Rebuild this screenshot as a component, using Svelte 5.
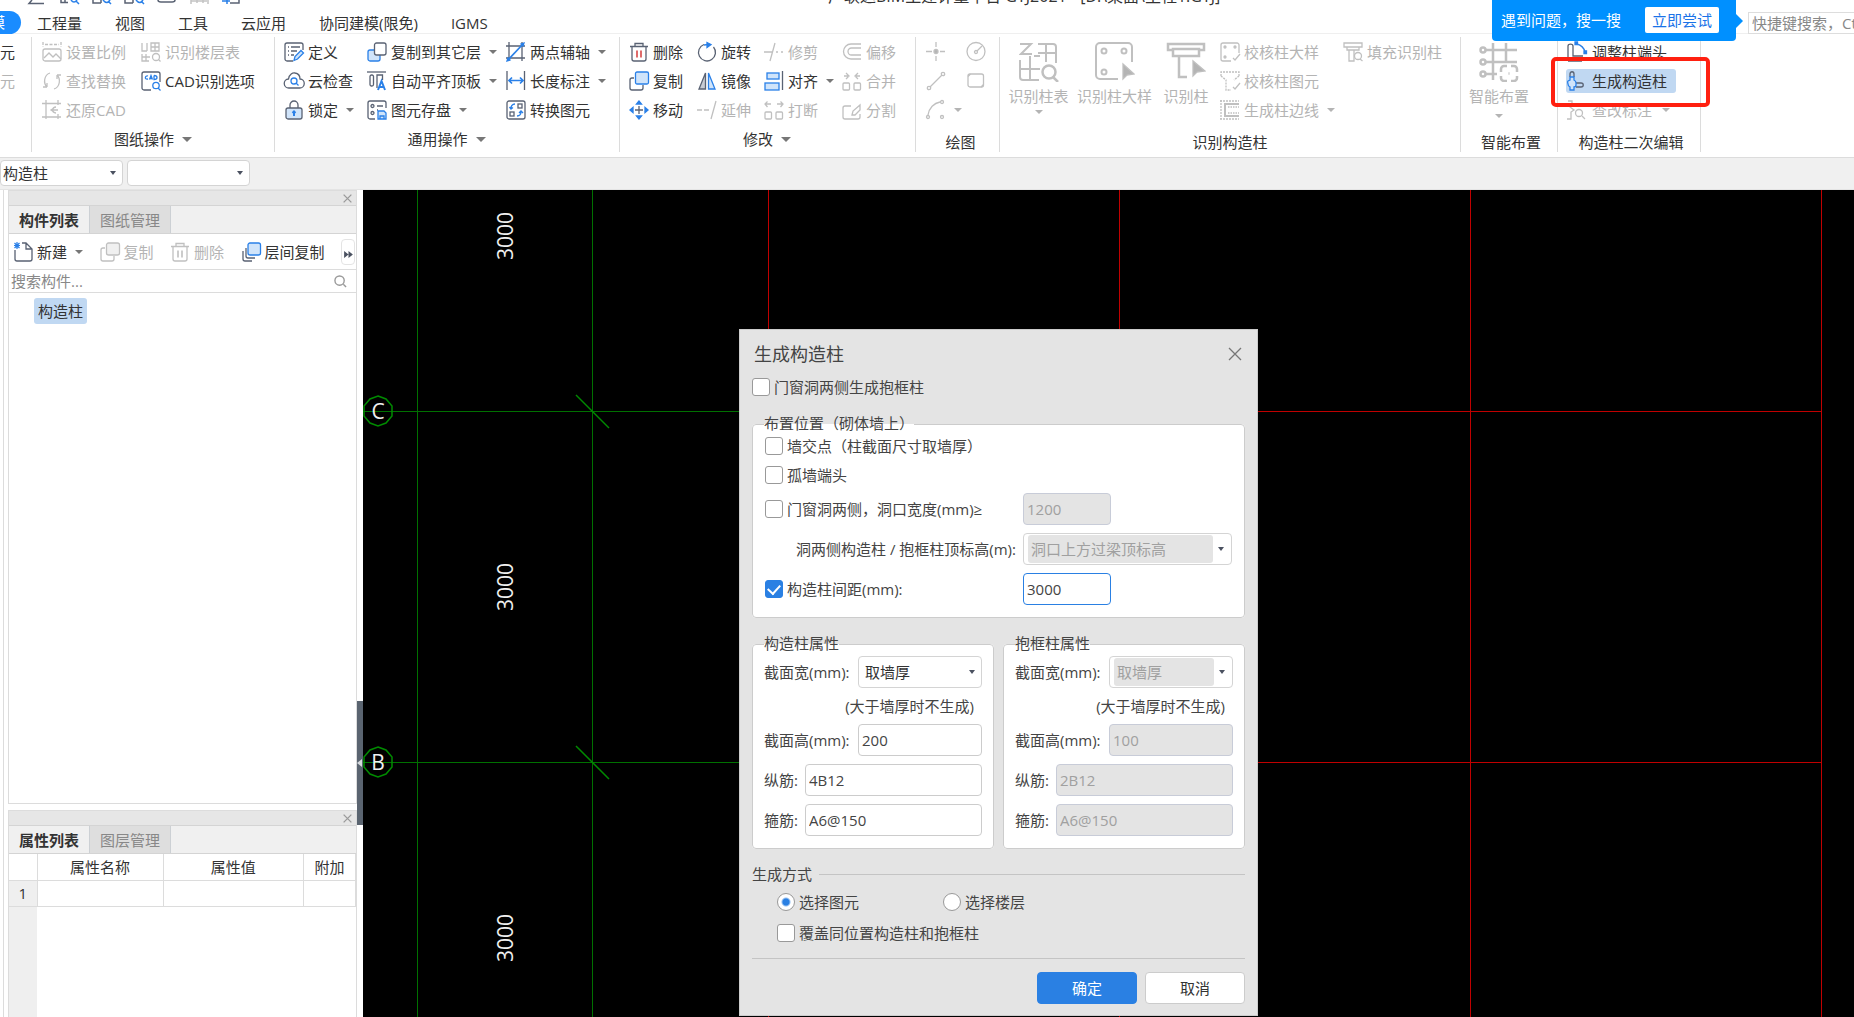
<script lang="ts">
	type Tool = { icon: string; label: string; off?: boolean; menu?: boolean; active?: boolean };
	type Group = { id: string; title: string; menu?: boolean; big?: Tool[]; cols: Tool[][] };

	const menu_tabs = ['工程量', '视图', '工具', '云应用', '协同建模(限免)', 'IGMS'];

	const groups: Group[] = [
		{
			id: 'sheet',
			title: '图纸操作',
			menu: true,
			cols: [
				[
					{ icon: 'scale', label: '设置比例', off: true },
					{ icon: 'replace', label: '查找替换', off: true },
					{ icon: 'restore', label: '还原CAD', off: true },
				],
				[
					{ icon: 'floors', label: '识别楼层表', off: true },
					{ icon: 'cad', label: 'CAD识别选项' },
				],
			],
		},
		{
			id: 'common',
			title: '通用操作',
			menu: true,
			cols: [
				[
					{ icon: 'define', label: '定义' },
					{ icon: 'cloud', label: '云检查' },
					{ icon: 'lock', label: '锁定', menu: true },
				],
				[
					{ icon: 'copyfloor', label: '复制到其它层', menu: true },
					{ icon: 'autoalign', label: '自动平齐顶板', menu: true },
					{ icon: 'save', label: '图元存盘', menu: true },
				],
				[
					{ icon: 'axis', label: '两点辅轴', menu: true },
					{ icon: 'length', label: '长度标注', menu: true },
					{ icon: 'convert', label: '转换图元' },
				],
			],
		},
		{
			id: 'modify',
			title: '修改',
			menu: true,
			cols: [
				[
					{ icon: 'trash', label: '删除' },
					{ icon: 'copy', label: '复制' },
					{ icon: 'move', label: '移动' },
				],
				[
					{ icon: 'rotate', label: '旋转' },
					{ icon: 'mirror', label: '镜像' },
					{ icon: 'extend', label: '延伸', off: true },
				],
				[
					{ icon: 'trim', label: '修剪', off: true },
					{ icon: 'align', label: '对齐', menu: true },
					{ icon: 'break', label: '打断', off: true },
				],
				[
					{ icon: 'offset', label: '偏移', off: true },
					{ icon: 'merge', label: '合并', off: true },
					{ icon: 'split', label: '分割', off: true },
				],
			],
		},
		{
			id: 'draw',
			title: '绘图',
			cols: [
				[
					{ icon: 'point', label: '', off: true },
					{ icon: 'line', label: '', off: true },
					{ icon: 'arc', label: '', off: true, menu: true },
				],
				[
					{ icon: 'circle', label: '', off: true },
					{ icon: 'rect', label: '', off: true },
				],
			],
		},
		{
			id: 'identify',
			title: '识别构造柱',
			big: [
				{ icon: 'bigtable', label: '识别柱表', off: true, menu: true },
				{ icon: 'bigdetail', label: '识别柱大样', off: true },
				{ icon: 'bigcolumn', label: '识别柱', off: true },
			],
			cols: [
				[
					{ icon: 'checkdetail', label: '校核柱大样', off: true },
					{ icon: 'checkelement', label: '校核柱图元', off: true },
					{ icon: 'edge', label: '生成柱边线', off: true, menu: true },
				],
				[{ icon: 'fill', label: '填充识别柱', off: true }],
			],
		},
		{
			id: 'smart',
			title: '智能布置',
			big: [{ icon: 'bigsmart', label: '智能布置', off: true, menu: true }],
			cols: [],
		},
		{
			id: 'edit',
			title: '构造柱二次编辑',
			cols: [
				[
					{ icon: 'adjust', label: '调整柱端头' },
					{ icon: 'generate', label: '生成构造柱', active: true },
					{ icon: 'note', label: '查改标注', off: true, menu: true },
				],
			],
		},
	];

	const B = 'stroke="#2a80e8"';
	const BF = 'stroke="#2a80e8" fill="#d0e4fa"';

	const icons: Record<string, string> = {
		scale: `<path d="M1 0v5M19 0v5M3 2.500h14" stroke-dasharray="3 1.500"/><rect x="1" y="7" width="18" height="12" rx="2"/><path d="M2 16l5-5 4 4 3-3 5 5"/>`,
		replace: `<path d="M8 2C2 4 1 12 5 16M5 16v-4M5 16H1M12 18c6-2 7-10 3-14M15 4v4M15 4h4"/>`,
		restore: `<path d="M4 0v19M0 3.500h19M0 17h19M16 0v5M16 14v5M14 7c-4 0-5 6 0 6M9 10h7M12 8l-3 2 3 2"/>`,
		floors: `<path d="M1 1v8h5M6 1v8M10 1h8v8h-8zM14 1v8M10 5h8M1 12v7h7M5 12v7M1 15h8"/><circle cx="15" cy="15" r="3.500"/><path d="M17.500 17.500l2 2"/>`,
		cad: `<path d="M10 19H3a2 2 0 0 1-2-2V3a2 2 0 0 1 2-2h14a2 2 0 0 1 2 2v8"/><path ${B} stroke-width="1.300" d="M7 5c-3-1-4 4 0 3M8.500 8.500L10 4.500l1.500 4M9 7.500h2M13 4.500v4c4 0 4-4 0-4"/><circle ${B} cx="15" cy="14.500" r="3.200"/><path ${B} d="M17 17l2.500 2.500"/>`,
		define: `<path d="M9 19H3a2 2 0 0 1-2-2V3a2 2 0 0 1 2-2h14a2 2 0 0 1 2 2v5"/><path d="M4 5h1M7 5h9M4 9h1M7 9h6M4 13h1M7 13h3"/><path ${BF} d="M10 18.500l1-4 6-6 2.500 2.500-6 6z"/>`,
		cloud: `<path d="M5 17a4.500 4.500 0 0 1-.500-9C5 3 9 1.500 11 2c3 .500 5 3 5 6a4.500 4.500 0 0 1-.500 9z"/><circle ${B} cx="10" cy="10" r="3"/><path ${B} d="M12 12l2.500 2.500"/>`,
		lock: `<path d="M6 8V5a4 4 0 0 1 8 0v3"/><rect x="2" y="8" width="16" height="11" rx="2" fill="#d0e4fa"/><path ${B} stroke-width="2" d="M10 16v-4M8.500 13l1.500-1.500 1.500 1.500"/>`,
		copyfloor: `<rect ${BF} x="1" y="8" width="12" height="11" rx="2"/><rect x="7.500" y="1" width="11.500" height="12" rx="2" fill="#fff"/>`,
		autoalign: `<path d="M0 1h19"/><rect x="3" y="4" width="3.500" height="11" rx="1.500"/><path d="M10 17V4h5.500v5"/><path ${B} stroke-width="2" d="M11 19l3.500-9 3.500 9M12.500 16h4"/>`,
		save: `<path d="M8 19H3a2 2 0 0 1-2-2V3a2 2 0 0 1 2-2h14a2 2 0 0 1 2 2v5"/><circle cx="5.500" cy="6" r="1.500"/><path d="M10 6h6M10 10h1"/><circle cx="5.500" cy="13" r="1.500"/><path ${BF} d="M11 11h6l2 2v6h-8zM13 19v-3h4v3"/>`,
		axis: `<path d="M3 0v19M16 0v19M0 4h19M0 16h19"/><path ${B} stroke-width="1.800" d="M2 18L17 2"/><path fill="#2a80e8" ${B} d="M1 19l1-3 2 2zM18 1l-1 3-2-2z"/>`,
		length: `<path d="M1 0v19M18.500 0v19"/><path ${B} stroke-width="1.700" d="M3 9.500h14M6 6.500l-3 3 3 3M14 6.500l3 3-3 3"/>`,
		convert: `<rect x="1" y="1" width="18" height="18" rx="2"/><rect x="12" y="4" width="4" height="4"/><rect x="4" y="12" width="4" height="4"/><path ${B} d="M9 4C6 4 5 6 5 8.500M3.500 7L5 9l2-1.500M11 16c3 0 4-2 4-4.500M13 13l2-2 2 2"/>`,
		trash: `<path d="M1 4.500h18M6 4V1.500h8V4M3 5v12a2 2 0 0 0 2 2h10a2 2 0 0 0 2-2V5"/><path class="mark" stroke="#d94848" stroke-width="1.600" d="M8 8.500v7M12 8.500v7"/>`,
		copy: `<path d="M5 7H3a2 2 0 0 0-2 2v8a2 2 0 0 0 2 2h9a2 2 0 0 0 2-2v-3"/><rect ${BF} x="6.500" y="1" width="13" height="12" rx="1.500"/>`,
		move: `<path d="M10 6v8M6 10h8"/><path ${B} fill="#2a80e8" d="M10 1L7.500 4h5zM10 19l-2.500-3h5zM1 10l3-2.500v5zM19 10l-3-2.500v5z"/>`,
		rotate: `<path d="M7 2.500A8.500 8.500 0 1 0 16.500 5"/><path ${B} fill="#2a80e8" d="M10 .500l4 2-4 3z"/><path ${B} d="M7 3l4-.500"/>`,
		mirror: `<path d="M8.500 2v16H2z" fill="#c8ccd4"/><path ${BF} d="M11.500 2v16H18z"/>`,
		extend: `<path d="M0 10h5M7 10h5M19 1l-5 18"/>`,
		trim: `<path d="M11 1L6 19M0 10h8M12 10h2M17 10h2"/>`,
		align: `<path d="M18.500 0v19"/><rect ${BF} x="3" y="2" width="12" height="6"/><rect ${BF} x="1" y="12" width="14" height="7"/>`,
		break: `<rect x="1" y="12" width="6.500" height="7" rx="1"/><rect x="12" y="12" width="6.500" height="7" rx="1"/><path d="M1 4h6M3.500 1.500L1 4l2.500 3M19 4h-6M16.500 1.500L19 4l-2.500 3"/>`,
		offset: `<path d="M19 2H9a7.500 7.500 0 0 0 0 15h10M19 6H9.500a3.500 3.500 0 0 0 0 7H19"/>`,
		merge: `<rect x="1" y="12" width="6.500" height="7" rx="1"/><rect x="12" y="12" width="6.500" height="7" rx="1"/><path d="M2 5h4M4 2l3 3-3 3M18 5h-4M16 2l-3 3 3 3"/>`,
		split: `<path d="M9 6H3a2 2 0 0 0-2 2v9a2 2 0 0 0 2 2h13a2 2 0 0 0 2-2v-3M10 15l1-4 7-6v5l-5 5z"/>`,
		point: `<path d="M10 0v5M10 14v5M0 9.500h6M14 9.500h5"/><circle cx="10" cy="9.500" r="2" fill="currentColor"/>`,
		line: `<circle cx="3" cy="17" r="1.700"/><circle cx="17" cy="3" r="1.700"/><path d="M4 16L16 4"/>`,
		arc: `<path d="M2 15C3 8 8 3 14 2"/><circle cx="2" cy="17" r="1.500"/><circle cx="16" cy="2" r="1.500"/><circle cx="16" cy="17" r="1.500"/>`,
		circle: `<circle cx="10" cy="9.500" r="9"/><circle cx="10" cy="10" r="1.500"/><path d="M11 9l5-5"/>`,
		rect: `<rect x="2" y="3" width="15.500" height="13" rx="2"/><path d="M2 5.500l2.500-2.500M15 16l2.500-2.500"/>`,
		bigtable: `<path stroke-width="2" d="M1 2h11L2 12h11M19 2h15a3 3 0 0 1 3 3v16M19 11h18M27 2v18M1 18v17a3 3 0 0 0 3 3h16M11 14v24M1 27h20M15 14h6"/><circle cx="30" cy="30" r="6.500" stroke-width="2.500"/><path stroke-width="2.500" d="M34 35l5 5"/>`,
		bigdetail: `<path stroke-width="2" d="M37 20V5a4 4 0 0 0-4-4H5a4 4 0 0 0-4 4v28a4 4 0 0 0 4 4h18"/><circle stroke-width="2" cx="9" cy="9" r="2.500"/><circle stroke-width="2" cx="29" cy="9" r="2.500"/><circle stroke-width="2" cx="9" cy="30" r="2.500"/><path fill="currentColor" d="M28 22v15l4-4 7-1z"/>`,
		bigcolumn: `<path stroke-width="2.500" d="M6 8H2V2h36v6h-4"/><rect stroke-width="2.500" x="7" y="7" width="26" height="7"/><path stroke-width="2.500" d="M13 15v20h8"/><path fill="currentColor" d="M27 19v15l4-4 8-1z"/>`,
		bigsmart: `<g stroke-width="2.500"><circle cx="4" cy="8" r="2.500"/><circle cx="4" cy="20" r="2.500"/><circle cx="4" cy="32" r="2.500"/><path d="M7 8h31M7 20h31M7 32h11M14 1v37M27 1v19"/><path d="M22 30v-3a3 3 0 0 1 3-3h3M32 24h3a3 3 0 0 1 3 3v3M38 34v2a3 3 0 0 1-3 3h-3M28 39h-3a3 3 0 0 1-3-3v-2M29.500 31.500h1"/></g>`,
		checkdetail: `<path d="M19 11V3a2 2 0 0 0-2-2H3a2 2 0 0 0-2 2v14a2 2 0 0 0 2 2h8M13 16l2 2 5-6"/><circle cx="5" cy="5" r="1"/><circle cx="15" cy="5" r="1"/><circle cx="5" cy="15" r="1"/>`,
		checkelement: `<path stroke-dasharray="2 1" d="M1 5V1h18v4M1 5l5 4v10h5M19 5l-5 4"/><path d="M13 16l2 2 5-6"/>`,
		edge: `<path stroke-dasharray="2 1" d="M1 0v19M0 1h19M0 19h19"/><path stroke-width="2" d="M19 4H5v12h14"/><path stroke-dasharray="1.500 1" d="M8 7h11M8 13h11"/>`,
		fill: `<path d="M1 5V1h18v4zM4 5v3h12V5M6 8v11h5V8"/><circle cx="15" cy="14" r="3.500"/><path d="M17 17l2.500 2"/>`,
		adjust: `<path d="M2 19V4c0-2.500 5-2.500 5 0v10h10M2 19h14"/><path ${B} d="M11 2c4 1 7 4 8 8"/><path fill="#2a80e8" ${B} d="M9 0h2.500v2.500H9zM18 9h2.500v2.500H18z"/>`,
		generate: `<path d="M4 6V3c0-3 4-3 4 0v3M10 12h5c3 0 3 4 0 4h-5"/><path ${BF} d="M4 6h4v3c2 1 2 2 2 3v2c0 1-1 2-2 2v3H4v-3c-2-1-2-2-2-3s-1-2 0-3l2-1z"/>`,
		note: `<path d="M2 1h4v4L4 7l4 3-3 2v7H1"/><circle cx="13" cy="13" r="3.500"/><path d="M16 16l3 3"/>`,
		newfile: `<path d="M2 8v9a2 2 0 0 0 2 2h13a2 2 0 0 0 2-2V7l-6-6H9M13 1v6h6"/><path ${B} stroke-width="1.200" d="M4 0v7M1 3.500h6M1.500 1l5 5M6.500 1l-5 5"/>`,
		paste: `<path d="M5 6H3a2 2 0 0 0-2 2v9a2 2 0 0 0 2 2h9a2 2 0 0 0 2-2v-3"/><rect x="6.500" y="1" width="13" height="12" rx="2" fill="#f0f0f0"/>`,
		floorcopy: `<path d="M2 9v8a2 2 0 0 0 2 2h7M5 6v8a2 2 0 0 0 2 2h7"/><rect ${BF} x="7" y="1" width="12.500" height="12" rx="2"/>`,
	};

	const verticals = [
		{ x: 54, color: '#007000' },
		{ x: 229, color: '#007000' },
		{ x: 405, color: '#c00000' },
		{ x: 756, color: '#c00000' },
		{ x: 1107, color: '#c00000' },
		{ x: 1458, color: '#c00000' },
	];
	const axes = [
		{ name: 'C', y: 221 },
		{ name: 'B', y: 572 },
	];
	const dimensions = [46, 397, 748];

	let frame_sides = $state(false);
	let at_crossing = $state(false);
	let at_end = $state(false);
	let at_opening = $state(false);
	let by_spacing = $state(true);
	let overwrite = $state(false);
	let mode = $state('element');
	let spacing = $state('3000');
</script>

{#snippet glyph(name: string)}
	<svg class="icon" viewBox="0 0 20 20" aria-hidden="true">{@html icons[name]}</svg>
{/snippet}

{#snippet tool(t: Tool)}
	<button class="tool" class:active={t.active} disabled={t.off} aria-label={t.label || t.icon}>
		{@render glyph(t.icon)}
		{#if t.label}<span>{t.label}</span>{/if}
		{#if t.menu}<i class="caret"></i>{/if}
	</button>
{/snippet}

{#snippet close_mark()}
	<svg class="cross" viewBox="0 0 14 14" aria-hidden="true"><path d="M1 1l12 12M13 1L1 13" /></svg>
{/snippet}

<div class="app">
	<header>
		<div class="titlebar">
			<svg class="quick" viewBox="0 0 300 6" aria-hidden="true">
				<path d="M32 0l-3 3.500h15M61 0v2.500h7M65 0v2M93 0v3h8M101 0v3M125 0v3h8M133 0v3M158 0q0 2 3 2h11q3 0 3-2" />
				<path class="pale" d="M191 0v4M197 0v3M203 0v3M208 0v4M191 1h16" />
				<path class="blue" d="M71 0q3 4 6 0M76 1l3 3M103 0q4 5 7 0M108 1l3 3M136 0q4 5 7 0M141 1l3 3M222 1h8M227 0v4" />
				<path d="M230 3h9V0" />
			</svg>
			<span>广联达BIM土建计量平台 GTJ2021 - [D:\桌面\主柱1.GTJ]</span>
		</div>
		<nav>
			<a class="current" href="#model">建模</a>
			{#each menu_tabs as tab}
				<a href="#{tab}">{tab}</a>
			{/each}
			<input class="command" type="text" aria-label="快捷键搜索" placeholder="快捷键搜索，Ctrl+F" />
		</nav>
		<div class="tip">
			<span>遇到问题，搜一搜</span>
			<button>立即尝试</button>
		</div>
	</header>

	<div class="ribbon">
		<section class="group cut">
			<div class="rows">
				<button class="tool">元</button>
				<button class="tool" disabled>元</button>
			</div>
		</section>
		{#each groups as group (group.id)}
			<section class="group {group.id}">
				<div class="tools">
					{#each group.big ?? [] as t}
						<button class="big" disabled={t.off}>
							<svg viewBox="0 0 40 40" aria-hidden="true">{@html icons[t.icon]}</svg>
							<span>{t.label}</span>
							{#if t.menu}<i class="caret"></i>{/if}
						</button>
					{/each}
					{#each group.cols as col}
						<div class="rows">
							{#each col as t}
								{@render tool(t)}
							{/each}
						</div>
					{/each}
				</div>
				<h2 class:plain={!group.menu}>
					{group.title}
					{#if group.menu}<i class="caret wide"></i>{/if}
				</h2>
				{#if group.id === 'edit'}<div class="highlight"></div>{/if}
			</section>
		{/each}
	</div>

	<div class="picker">
		<div class="select"><select aria-label="构件类型"><option>构造柱</option></select></div>
		<div class="select"><select aria-label="构件"><option></option></select></div>
	</div>

	<div class="workspace">
		<div class="edge"></div>
		<aside>
			<section class="panel list">
				<div class="bar"><button aria-label="关闭">{@render close_mark()}</button></div>
				<div class="tabs">
					<button class="on">构件列表</button>
					<button>图纸管理</button>
				</div>
				<div class="actions">
					{@render tool({ icon: 'newfile', label: '新建', menu: true })}
					{@render tool({ icon: 'paste', label: '复制', off: true })}
					{@render tool({ icon: 'trash', label: '删除', off: true })}
					{@render tool({ icon: 'floorcopy', label: '层间复制' })}
					<button class="more" aria-label="更多">
						<svg viewBox="0 0 10 8" aria-hidden="true"><path d="M0 0l5 4-5 4zM5 0l5 4-5 4z" /></svg>
					</button>
				</div>
				<label class="search">
					<input type="text" aria-label="搜索构件" placeholder="搜索构件..." />
					<svg viewBox="0 0 14 14" aria-hidden="true"><circle cx="6" cy="6" r="5" /><path d="M10 10l3 3" /></svg>
				</label>
				<ul>
					<li>构造柱</li>
				</ul>
			</section>

			<section class="panel props">
				<div class="bar"><button aria-label="关闭">{@render close_mark()}</button></div>
				<div class="tabs">
					<button class="on">属性列表</button>
					<button>图层管理</button>
				</div>
				<div class="grid">
					<table>
						<thead>
							<tr><th class="num"></th><th class="name">属性名称</th><th>属性值</th><th class="extra">附加</th></tr>
						</thead>
						<tbody>
							<tr><td class="num">1</td><td></td><td></td><td></td></tr>
						</tbody>
					</table>
					<div class="gutter"></div>
				</div>
			</section>
		</aside>
		<div class="splitter"><span></span></div>

		<main>
			<svg class="drawing" aria-label="轴网">
				{#each verticals as line}
					<line x1={line.x} x2={line.x} y1="0" y2="100%" stroke={line.color} />
				{/each}
				{#each axes as axis}
					<line x1="0" x2="405" y1={axis.y} y2={axis.y} stroke="#007000" />
					<line x1="405" x2="1458" y1={axis.y} y2={axis.y} stroke="#c00000" />
					<line class="tick" x1="213" x2="246" y1={axis.y - 16} y2={axis.y + 17} />
					<g transform="translate(15 {axis.y})">
						<polygon points="0,-15 8,-12 14,-5 14,5 8,12 0,15 -8,12 -14,5 -14,-5 -8,-12" />
						<text y="8">{axis.name}</text>
					</g>
				{/each}
				{#each dimensions as y}
					<text transform="translate(150 {y}) rotate(-90)">3000</text>
				{/each}
			</svg>

			<form class="dialog" onsubmit={(e) => e.preventDefault()}>
				<div class="heading">
					<h1>生成构造柱</h1>
					<button type="button" aria-label="关闭">{@render close_mark()}</button>
				</div>
				<label class="check"><input type="checkbox" bind:checked={frame_sides} />门窗洞两侧生成抱框柱</label>

				<fieldset class="place">
					<legend>布置位置（砌体墙上）</legend>
					<label class="check"><input type="checkbox" bind:checked={at_crossing} />墙交点（柱截面尺寸取墙厚）</label>
					<label class="check"><input type="checkbox" bind:checked={at_end} />孤墙端头</label>
					<div class="row">
						<label class="check"><input type="checkbox" bind:checked={at_opening} />门窗洞两侧，洞口宽度(mm)≥</label>
						<input class="field short" type="text" aria-label="洞口宽度" value="1200" disabled />
					</div>
					<div class="row">
						<label class="right" for="top">洞两侧构造柱 / 抱框柱顶标高(m):</label>
						<div class="select off"><select id="top" disabled><option>洞口上方过梁顶标高</option></select></div>
					</div>
					<div class="row">
						<label class="check"><input type="checkbox" bind:checked={by_spacing} />构造柱间距(mm):</label>
						<input class="field short focus" type="text" aria-label="构造柱间距" bind:value={spacing} />
					</div>
				</fieldset>

				<div class="pair">
					<fieldset>
						<legend>构造柱属性</legend>
						<div class="line">
							<label for="w1">截面宽(mm):</label>
							<div class="select"><select id="w1"><option>取墙厚</option></select></div>
						</div>
						<p>(大于墙厚时不生成)</p>
						<div class="line"><label for="h1">截面高(mm):</label><input id="h1" class="field" value="200" /></div>
						<div class="line bars"><label for="v1">纵筋:</label><input id="v1" class="field" value="4B12" /></div>
						<div class="line bars"><label for="s1">箍筋:</label><input id="s1" class="field" value="A6@150" /></div>
					</fieldset>
					<fieldset>
						<legend>抱框柱属性</legend>
						<div class="line">
							<label for="w2">截面宽(mm):</label>
							<div class="select off"><select id="w2" disabled><option>取墙厚</option></select></div>
						</div>
						<p>(大于墙厚时不生成)</p>
						<div class="line"><label for="h2">截面高(mm):</label><input id="h2" class="field" value="100" disabled /></div>
						<div class="line bars"><label for="v2">纵筋:</label><input id="v2" class="field" value="2B12" disabled /></div>
						<div class="line bars"><label for="s2">箍筋:</label><input id="s2" class="field" value="A6@150" disabled /></div>
					</fieldset>
				</div>

				<div class="caption">生成方式</div>
				<div class="modes">
					<label class="check"><input type="radio" value="element" bind:group={mode} />选择图元</label>
					<label class="check"><input type="radio" value="floor" bind:group={mode} />选择楼层</label>
				</div>
				<div class="modes">
					<label class="check"><input type="checkbox" bind:checked={overwrite} />覆盖同位置构造柱和抱框柱</label>
				</div>
				<div class="buttons">
					<button class="primary">确定</button>
					<button type="button">取消</button>
				</div>
			</form>
		</main>
	</div>
</div>

<style>
	:global(body) {
		margin: 0;
		background: #fff;
	}

	.app,
	button,
	input,
	select {
		font-family: 'Open Sans', 'Noto Sans CJK SC', sans-serif;
		font-size: 15px;
		color: #333;
	}

	.app {
		min-height: 100vh;
		display: flex;
		flex-direction: column;
		line-height: 20px;
		overflow: hidden;
	}

	.app * {
		box-sizing: border-box;
	}

	button {
		border: none;
		background: none;
		padding: 0;
		line-height: 20px;
		white-space: nowrap;
	}

	header {
		position: relative;
		height: 34px;
		border-bottom: 1px solid #efefef;
	}

	.titlebar {
		height: 6px;
		display: flex;
		align-items: flex-end;
		gap: 528px;
		overflow: hidden;
		font-size: 16px;
		white-space: nowrap;
	}

	.quick {
		width: 300px;
		height: 6px;
		flex: none;
		fill: none;
		stroke: #596273;
		stroke-width: 1.5;
	}

	.quick .pale {
		stroke: #c4c4c4;
	}

	.quick .blue {
		stroke: #2a80e8;
	}

	nav {
		display: flex;
		align-items: center;
		gap: 33px;
		height: 28px;
		padding-top: 5px;
	}

	nav a {
		color: #333;
		text-decoration: none;
		white-space: nowrap;
	}

	nav .current {
		width: 80px;
		margin: 0 -17px 0 -59px;
		padding-right: 16px;
		line-height: 23px;
		text-align: right;
		color: #fff;
		background: #1a8cff;
		border-radius: 12px;
	}

	.command {
		width: 106px;
		height: 22px;
		margin-left: auto;
		padding: 0 0 0 3px;
		border: 1px solid #ddd;
		border-right: none;
		outline: none;
	}

	.command::placeholder,
	.search input::placeholder {
		color: #888;
		opacity: 1;
	}

	.tip {
		position: absolute;
		top: 0;
		right: 118px;
		z-index: 3;
		width: 244px;
		height: 41px;
		padding: 0 17px 2px 9px;
		display: flex;
		align-items: center;
		justify-content: space-between;
		color: #fff;
		background: #0090ff;
		border-radius: 0 0 4px 4px;
	}

	.tip::after {
		content: '';
		position: absolute;
		left: 100%;
		top: 14px;
		border: 7px solid transparent;
		border-left-color: #0090ff;
		border-right: none;
	}

	.tip button {
		width: 74px;
		height: 26px;
		color: #1a73e8;
		background: #fff;
		border-radius: 2px;
	}

	.ribbon {
		display: grid;
		grid-template-columns: 32px 243px 345px 296px 84px 461px 97px 143px;
		height: 124px;
		padding: 3px 0 5px;
		border-bottom: 1px solid #dcdcdc;
	}

	.group {
		position: relative;
		display: flex;
		flex-direction: column;
		justify-content: space-between;
		padding-left: 9px;
		border-right: 1px solid #dcdcdc;
	}

	.group.cut,
	.group.identify {
		padding-left: 0;
	}

	.group.sheet,
	.group.draw {
		padding-left: 10px;
	}

	.group.smart,
	.group.edit {
		padding-left: 8px;
	}

	.group h2 {
		display: flex;
		align-items: center;
		justify-content: center;
		gap: 8px;
		margin: 0 10px 3px 0;
		font-size: 15px;
		font-weight: 400;
		line-height: 20px;
	}

	.group h2.plain {
		margin: 0 4px 0 0;
	}

	.identify h2.plain {
		margin-right: 0;
	}

	.tools {
		display: grid;
	}

	.sheet .tools {
		grid-template-columns: 99px auto;
	}

	.common .tools {
		grid-template-columns: 83px 139px auto;
	}

	.modify .tools {
		grid-template-columns: 68px 67px 78px auto;
	}

	.draw .tools {
		grid-template-columns: 40px auto;
	}

	.identify .tools {
		grid-template-columns: 77px 75px 68px 123px auto;
	}

	.smart .tools {
		grid-template-columns: 60px;
	}

	.rows {
		display: flex;
		flex-direction: column;
		align-items: flex-start;
		gap: 5px;
		padding-top: 3px;
	}

	.tool {
		display: flex;
		align-items: center;
		gap: 4px;
		height: 24px;
	}

	.edit .tool {
		gap: 6px;
	}

	.tool:disabled,
	.big:disabled {
		color: #b4b4b4;
	}

	.tool.active {
		padding-right: 9px;
		background: #c0d8f2;
		border-radius: 3px;
	}

	.icon {
		width: 20px;
		height: 20px;
		flex: none;
		fill: none;
		stroke: #596273;
		stroke-width: 1.3;
		overflow: visible;
	}

	.tool:disabled .icon {
		stroke: #c0c0c0;
	}

	.tool:disabled .icon :global(.mark) {
		stroke: #c0c0c0;
	}

	.caret {
		width: 0;
		height: 0;
		margin-left: 4px;
		border: 4px solid transparent;
		border-top-color: #777;
		border-bottom: none;
	}

	:disabled .caret {
		border-top-color: #b4b4b4;
	}

	.caret.wide {
		margin: 0;
		border-width: 5px 5px 0;
	}

	.big {
		display: flex;
		flex-direction: column;
		align-items: center;
		gap: 4px;
		padding-top: 5px;
	}

	.big svg {
		width: 40px;
		height: 40px;
		fill: none;
		stroke: #c0c0c0;
		stroke-width: 1.3;
	}

	.big .caret {
		margin: 0;
	}

	.smart .caret {
		margin-top: 4px;
	}

	.highlight {
		position: absolute;
		z-index: 2;
		left: -7px;
		top: 20px;
		width: 159px;
		height: 50px;
		border: 4px solid #ff2010;
		border-radius: 5px;
	}

	.picker {
		display: flex;
		gap: 4px;
		height: 32px;
		padding: 2px 0 3px;
		background: #f0f0f0;
		border-bottom: 1px solid #e4e4e4;
	}

	.picker .select {
		width: 123px;
	}

	.picker select {
		padding-left: 2px;
	}

	.select {
		display: flex;
		align-items: center;
		padding-right: 6px;
		background: #fff;
		border: 1px solid #d4d4d4;
		border-radius: 4px;
	}

	.select::after {
		content: '';
		border: 3px solid transparent;
		border-top: 4px solid #4a5160;
		border-bottom: none;
	}

	select {
		flex: 1;
		min-width: 0;
		height: 100%;
		padding: 0 6px;
		border: none;
		background: none;
		outline: none;
		appearance: none;
	}

	.workspace {
		flex: 1;
		display: flex;
	}

	.edge {
		width: 4px;
		margin-right: 4px;
		border-right: 1px solid #dcdcdc;
	}

	aside {
		width: 349px;
		display: flex;
		flex-direction: column;
		gap: 6px;
	}

	.panel {
		display: flex;
		flex-direction: column;
		border: 1px solid #dcdcdc;
	}

	.list {
		flex: 1;
	}

	.props {
		flex: 0 0 207px;
		border-bottom: none;
	}

	.bar {
		display: flex;
		justify-content: flex-end;
		height: 15px;
		padding-right: 4px;
		background: #e6e6e6;
		border-bottom: 1px solid #d4d4d4;
	}

	.bar button {
		display: flex;
		align-items: center;
	}

	.cross {
		width: 9px;
		height: 9px;
		fill: none;
		stroke: #999;
		stroke-width: 2;
	}

	.tabs {
		display: flex;
		height: 28px;
		background: #f0f0f0;
		border-bottom: 1px solid #d4d4d4;
	}

	.tabs button {
		width: 81px;
		color: #888;
		background: #dedede;
		border-right: 1px solid #ccd0d4;
	}

	.tabs .on {
		font-weight: 700;
		color: #333;
		background: #f0f0f0;
	}

	.actions {
		display: flex;
		align-items: center;
		justify-content: space-between;
		height: 36px;
		padding: 0 1px 0 4px;
		border-bottom: 1px solid #dcdcdc;
	}

	.more {
		width: 14px;
		height: 26px;
		border: 1px solid #e4e4e4;
		border-radius: 4px;
	}

	.more svg {
		width: 9px;
		height: 7px;
		fill: #4a5160;
	}

	.search {
		display: flex;
		align-items: center;
		height: 23px;
		padding: 0 9px 0 2px;
		border-bottom: 1px solid #dcdcdc;
	}

	.search input {
		flex: 1;
		padding: 0;
		border: none;
		outline: none;
	}

	.search svg {
		width: 13px;
		height: 13px;
		fill: none;
		stroke: #999;
		stroke-width: 1.5;
	}

	ul {
		margin: 0;
		padding: 5px 25px;
		list-style: none;
	}

	li {
		width: max-content;
		padding: 3px 4px;
		background: #c0d8f2;
		border-radius: 3px;
	}

	.grid {
		flex: 1;
		display: flex;
		flex-direction: column;
	}

	table {
		width: 347px;
		border-collapse: collapse;
		table-layout: fixed;
	}

	th,
	td {
		height: 26px;
		padding: 0;
		font-weight: 400;
		text-align: center;
		border: 1px solid #dcdcdc;
		border-top: none;
		border-left: none;
	}

	.num {
		width: 28px;
	}

	.name {
		width: 126px;
	}

	.extra {
		width: 52px;
	}

	td.num,
	.gutter {
		background: #efefef;
	}

	.gutter {
		flex: 1;
		width: 28px;
	}

	.splitter {
		width: 6px;
		display: flex;
		align-items: flex-end;
		padding-bottom: 192px;
	}

	.splitter span {
		display: flex;
		align-items: center;
		width: 6px;
		height: 124px;
		background: #5a6470;
	}

	.splitter span::before {
		content: '';
		border: 4px solid transparent;
		border-right: 5px solid #d4d8dc;
		border-left: none;
	}

	main {
		position: relative;
		flex: 1;
		background: #000;
		overflow: hidden;
	}

	.drawing {
		display: block;
		width: 100%;
		height: 100%;
	}

	.drawing line {
		shape-rendering: crispEdges;
	}

	.drawing .tick,
	.drawing polygon {
		fill: none;
		stroke: #008a00;
		stroke-width: 1.5;
		shape-rendering: auto;
	}

	.drawing text {
		fill: #f0f0f0;
		font-size: 21px;
		text-anchor: middle;
	}

	/* floating tool window over the drawing area */
	.dialog {
		position: absolute;
		top: 139px;
		left: 376px;
		width: 519px;
		padding: 12px 12px 11px;
		background: #e4e4e4;
		border: 1px solid #ccc;
		color: #444;
	}

	.heading {
		display: flex;
		align-items: center;
		justify-content: space-between;
		height: 24px;
		padding: 0 15px 0 2px;
		margin: 0 -12px 10px 0;
	}

	.heading .cross {
		display: block;
		width: 14px;
		height: 14px;
		stroke-width: 1.3;
		stroke: #777;
	}

	h1 {
		margin: 0;
		font-size: 18px;
		font-weight: 400;
	}

	.check {
		display: flex;
		align-items: center;
		gap: 4px;
		height: 21px;
		white-space: nowrap;
	}

	.check input {
		appearance: none;
		flex: none;
		width: 18px;
		height: 18px;
		margin: 0;
		background: #fff;
		border: 1px solid #999;
		border-radius: 3px;
	}

	.check input:checked {
		border-color: #2a80e3;
		background: #2a80e3;
	}

	.check input[type='checkbox']:checked {
		display: grid;
		place-items: center;
	}

	.check input[type='checkbox']:checked::after {
		content: '';
		width: 6px;
		height: 10px;
		margin-bottom: 3px;
		border: solid #fff;
		border-width: 0 2px 2px 0;
		transform: rotate(42deg);
	}

	.check input[type='radio'] {
		border-radius: 50%;
	}

	.check input[type='radio']:checked {
		border-color: #999;
		background: radial-gradient(circle, #2a80e3 3px, #fff 5px);
	}

	fieldset {
		min-width: 0;
		margin: 0;
		padding: 0 12px 12px;
		display: flex;
		flex-direction: column;
		gap: 8px;
		background: #fff;
		border: 1px solid #ccc;
		border-radius: 4px;
	}

	legend {
		height: 22px;
		padding: 0;
		margin-left: -1px;
		line-height: 20px;
	}

	.place {
		margin-top: 16px;
	}

	.row {
		display: grid;
		grid-template-columns: 258px auto;
		align-items: center;
	}

	.right {
		padding-right: 7px;
		text-align: right;
	}

	.short {
		width: 88px;
	}

	.dialog .select,
	.field {
		height: 32px;
	}

	.field {
		min-width: 0;
		padding: 0 3px;
		color: #444;
		background: #fff;
		border: 1px solid #ccc;
		border-radius: 4px;
		outline: none;
	}

	.field.focus {
		border-color: #2a80e3;
	}

	.field:disabled {
		color: #a0a0a0;
		background: #e4e4e4;
		border-color: #c8ccd8;
	}

	.select.off {
		padding: 1px 7px 1px 4px;
		gap: 5px;
	}

	.select.off select {
		padding: 0 3px;
		color: #a0a0a0;
		background: #e4e4e4;
		border-radius: 3px;
		opacity: 1;
	}

	.pair {
		display: grid;
		grid-template-columns: 1fr 1fr;
		gap: 9px;
		margin-top: 15px;
	}

	.pair fieldset {
		padding: 1px 11px 12px;
	}

	.pair legend {
		margin-left: 0;
	}

	.line {
		display: grid;
		grid-template-columns: 94px 1fr;
		align-items: center;
	}

	.line.bars {
		grid-template-columns: 41px 1fr;
	}

	.pair p {
		margin: 0;
		padding-right: 8px;
		text-align: right;
	}

	.caption {
		display: flex;
		align-items: center;
		gap: 7px;
		margin: 15px 0 7px;
	}

	.caption::after {
		content: '';
		flex: 1;
		border-top: 1px solid #c4c4c4;
	}

	.modes {
		display: grid;
		grid-template-columns: 166px auto;
		padding-left: 25px;
		margin-bottom: 10px;
	}

	.buttons {
		display: flex;
		justify-content: flex-end;
		gap: 8px;
		margin-top: 15px;
		padding-top: 13px;
		border-top: 1px solid #c4c4c4;
	}

	.buttons button {
		width: 100px;
		height: 32px;
		background: #fff;
		border: 1px solid #ccc;
		border-radius: 4px;
	}

	.buttons .primary {
		color: #fff;
		background: #2a80e3;
		border-color: #2a80e3;
	}
</style>
